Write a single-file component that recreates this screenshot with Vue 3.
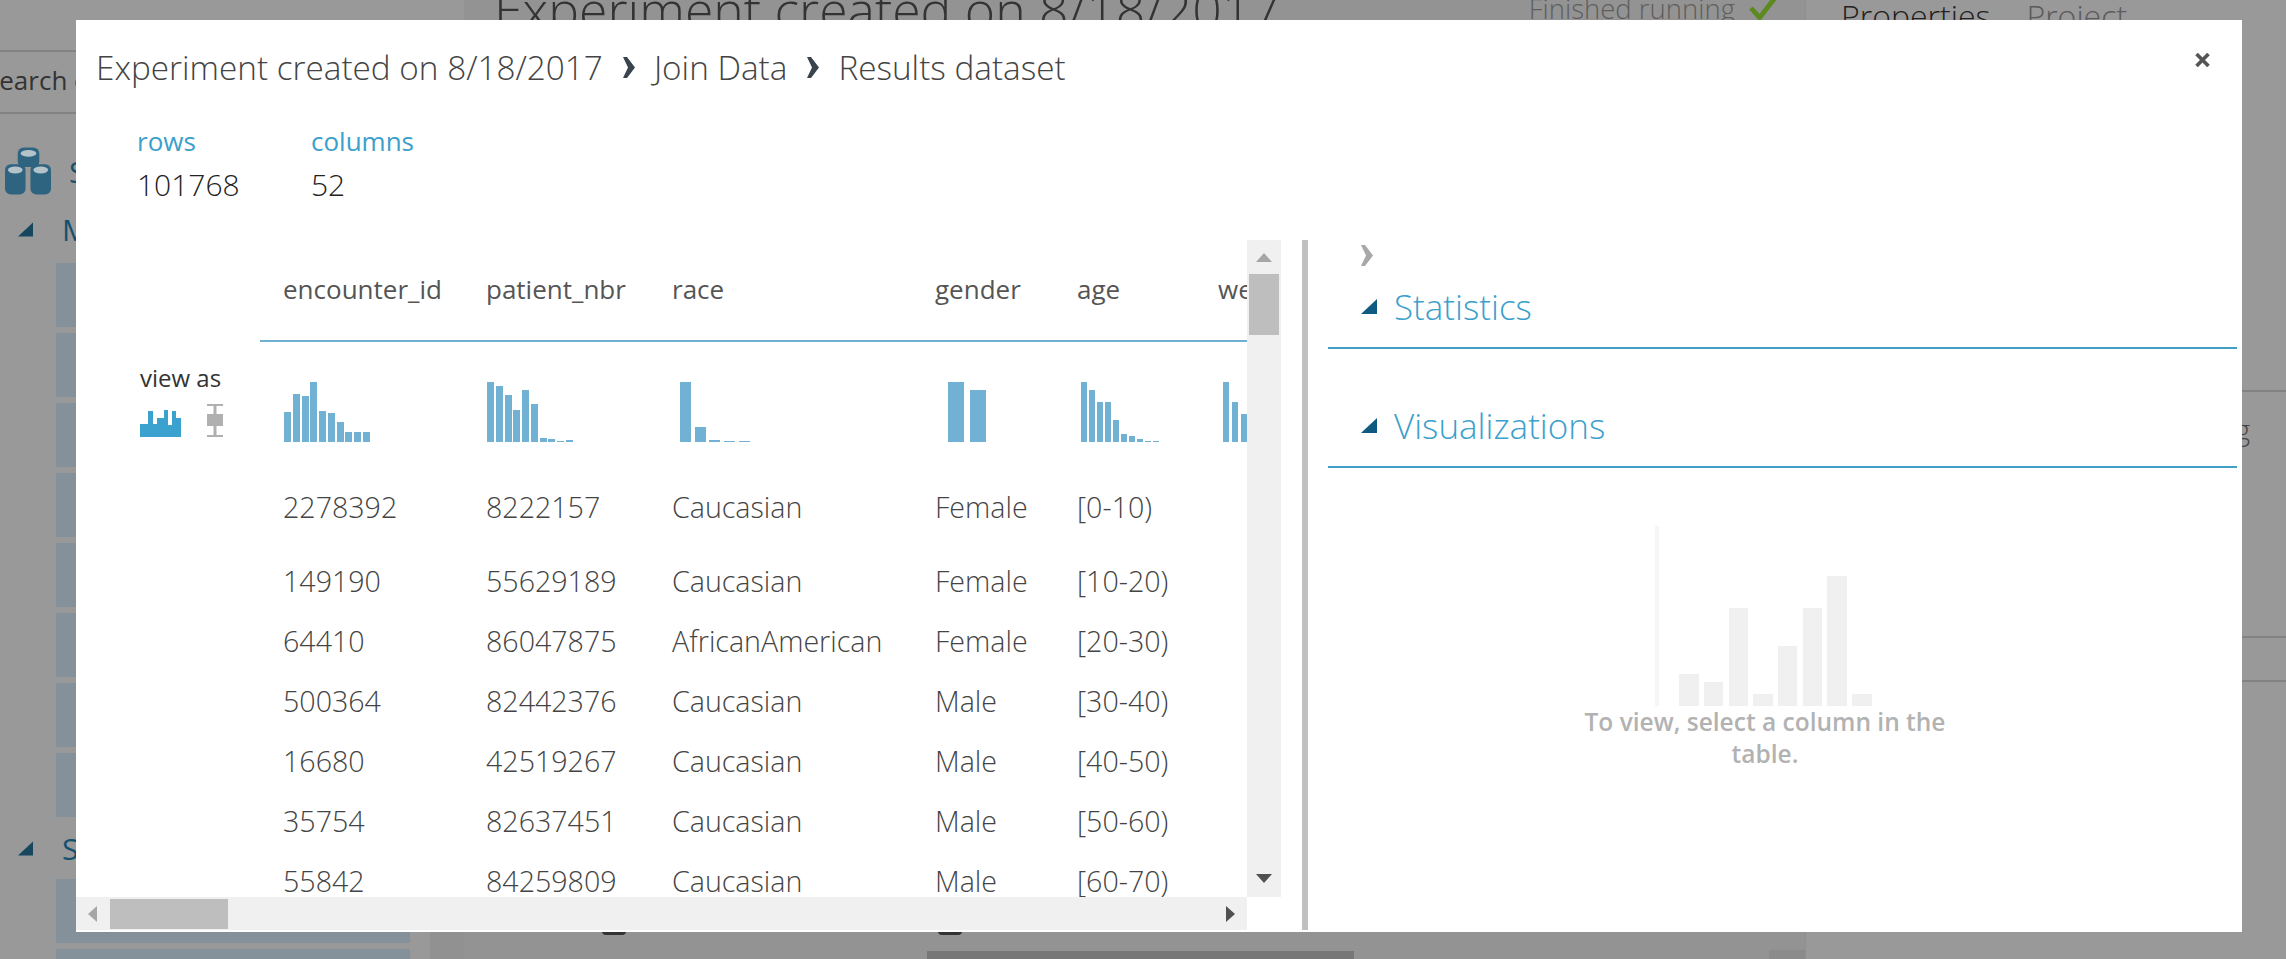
<template>
  <div class="page">
    <aside class="sidebar">
      <div class="search">Search experiment items</div>
      <div class="saved">
        <svg class="stack" viewBox="0 0 48 48">
          <rect x="13" y="0" width="22" height="20" rx="6" fill="#2f6480" />
          <ellipse cx="24" cy="6" rx="8" ry="3.5" fill="#b4c2ca" />
          <rect x="0" y="17" width="21" height="31" rx="6" fill="#2f6480" />
          <rect x="26" y="17" width="21" height="31" rx="6" fill="#2f6480" />
          <ellipse cx="10.5" cy="23" rx="7.5" ry="3.5" fill="#b4c2ca" />
          <ellipse cx="36.5" cy="23" rx="7.5" ry="3.5" fill="#b4c2ca" />
        </svg>
        <span>Saved Datasets</span>
      </div>
      <div class="group-head">
        <svg class="tri" viewBox="0 0 16 15"><path d="M16 0 V15 H0 Z" /></svg>
        <span>My Datasets</span>
      </div>
      <div class="tiles">
        <div v-for="n in 8" :key="n" class="tile"></div>
      </div>
      <div class="group-head second">
        <svg class="tri" viewBox="0 0 16 15"><path d="M16 0 V15 H0 Z" /></svg>
        <span>Samples</span>
      </div>
      <div class="tiles">
        <div v-for="n in 2" :key="n" class="tile"></div>
      </div>
      <div class="side-strip"></div>
    </aside>

    <main class="canvas">
      <div class="canvas-head">
        <h1>Experiment created on 8/18/2017</h1>
        <div class="status">
          <span>Finished running</span>
          <svg class="check" viewBox="0 0 30 24"><path d="M2 12 L11 22 L28 0" /></svg>
        </div>
      </div>
      <div class="node-dot dot-a"></div>
      <div class="node-dot dot-b"></div>
      <div class="node-corner"></div>
      <div class="canvas-thumb"></div>
    </main>

    <aside class="props">
      <div class="props-tabs">
        <span class="tab-on">Properties</span>
        <span>Project</span>
      </div>
      <div class="props-line first"></div>
      <div class="props-text">Logging</div>
      <div class="props-line second"></div>
      <div class="props-line third"></div>
    </aside>

    <section class="modal">
      <header class="crumbs">
        <span>Experiment created on 8/18/2017</span>
        <svg class="crumb-sep" viewBox="0 0 15 21"><path d="M2 0 H6 L14 10.5 L6 21 H2 L7 10.5 Z" /></svg>
        <span>Join Data</span>
        <svg class="crumb-sep" viewBox="0 0 15 21"><path d="M2 0 H6 L14 10.5 L6 21 H2 L7 10.5 Z" /></svg>
        <span>Results dataset</span>
        <svg class="close" viewBox="0 0 15 14"><path d="M1.5 1 L13.5 13 M13.5 1 L1.5 13" /></svg>
      </header>

      <div class="stats">
        <div class="stat rows-stat">
          <div class="stat-label">rows</div>
          <div class="stat-value">101768</div>
        </div>
        <div class="stat">
          <div class="stat-label">columns</div>
          <div class="stat-value">52</div>
        </div>
      </div>

      <div class="body">
        <div class="table-pane">
          <div class="table-top">
            <div class="table-clip">
              <div class="view-as">
                <div class="view-label">view as</div>
                <div class="view-icons">
                  <svg class="view-hist" viewBox="0 0 41 27">
                    <path d="M0 27 V14 H8 V1 H13 V14 H17 V8 H24 V0 H28 V15 H32 V1 H36 V8 H41 V27 Z" />
                  </svg>
                  <svg class="view-box" viewBox="0 0 16 33">
                    <path d="M0 0 H16 V2 H9.5 V10 H16 V22 H9.5 V31 H16 V33 H0 V31 H6.5 V22 H0 V10 H6.5 V2 H0 Z" />
                  </svg>
                </div>
              </div>
              <div class="grid">
                <div class="grid-row head-row">
                  <div v-for="col in columns" :key="col" class="cell">{{ col }}</div>
                </div>
                <div class="grid-row hist-row">
                  <div v-for="(hist, i) in histograms" :key="i" class="hist" :style="{ gap: hist.gap + 'px', marginLeft: hist.left + 'px' }">
                    <div
                      v-for="(h, j) in hist.bars"
                      :key="j"
                      class="hist-bar"
                      :style="{ width: hist.width + 'px', height: h + 'px' }"
                    ></div>
                  </div>
                </div>
                <div v-for="(row, i) in rows" :key="i" class="grid-row data-row" :class="{ 'first-row': i === 0 }">
                  <div v-for="(val, j) in row" :key="j" class="cell">{{ val }}</div>
                </div>
              </div>
            </div>
            <div class="vscroll">
              <span class="arrow up"></span>
              <div class="vthumb"></div>
              <span class="arrow down"></span>
            </div>
          </div>
          <div class="hscroll">
            <span class="arrow left"></span>
            <div class="hthumb"></div>
            <span class="arrow right"></span>
          </div>
        </div>

        <div class="splitter"></div>

        <div class="detail">
          <div class="detail-top">
            <svg class="detail-chev" viewBox="0 0 15 21"><path d="M2 0 H6 L14 10.5 L6 21 H2 L7 10.5 Z" /></svg>
          </div>
          <div class="section-head">
            <svg class="sec-tri" viewBox="0 0 16 15"><path d="M16 0 V15 H0 Z" /></svg>
            <span>Statistics</span>
          </div>
          <div class="section-head viz">
            <svg class="sec-tri" viewBox="0 0 16 15"><path d="M16 0 V15 H0 Z" /></svg>
            <span>Visualizations</span>
          </div>
          <div class="placeholder">
            <div class="axis"></div>
            <div v-for="(h, i) in placeholderBars" :key="i" class="ph-bar" :style="{ height: h + 'px' }"></div>
          </div>
          <p class="ph-text">To view, select a column in the table.</p>
        </div>
      </div>
    </section>
  </div>
</template>

<script setup>
const columns = ['encounter_id', 'patient_nbr', 'race', 'gender', 'age', 'weight']

const rows = [
  ['2278392', '8222157', 'Caucasian', 'Female', '[0-10)'],
  ['149190', '55629189', 'Caucasian', 'Female', '[10-20)'],
  ['64410', '86047875', 'AfricanAmerican', 'Female', '[20-30)'],
  ['500364', '82442376', 'Caucasian', 'Male', '[30-40)'],
  ['16680', '42519267', 'Caucasian', 'Male', '[40-50)'],
  ['35754', '82637451', 'Caucasian', 'Male', '[50-60)'],
  ['55842', '84259809', 'Caucasian', 'Male', '[60-70)']
]

// bar heights read off the reference
const histograms = [
  { width: 7, gap: 1.75, left: 1, bars: [30, 48, 46, 60, 31, 29, 20, 10, 10, 10] },
  { width: 7, gap: 1.75, left: 1, bars: [60, 56, 47, 32, 52, 38, 4, 3, 1, 2] },
  { width: 11, gap: 3.7, left: 8, bars: [60, 15, 2, 1.5, 1] },
  { width: 16, gap: 6, left: 13, bars: [60, 52] },
  { width: 5.5, gap: 2.5, left: 4, bars: [60, 52, 40, 40, 22, 8, 6, 3.5, 1.5, 1] },
  { width: 6, gap: 3, left: 5, bars: [60, 40, 28, 20] }
]

const placeholderBars = [32, 24, 98, 12, 60, 98, 130, 12]
</script>

<style>
html,
body {
  margin: 0;
  overflow: hidden;
  background: #999;
}
</style>

<style scoped>
.page {
  position: relative;
  display: flex;
  width: 2286px;
  height: 959px;
  overflow: hidden;
  background: #999;
  font-family: "Open Sans", "Noto Sans", sans-serif;
  font-weight: 300;
  color: #333;
}

.sidebar {
  position: relative;
  flex: 0 0 464px;
  box-sizing: border-box;
  padding-top: 50px;
  background: #999;
  overflow: hidden;
}

.search {
  height: 60px;
  line-height: 56px;
  margin-bottom: 33px;
  border-top: 2px solid #828282;
  border-bottom: 2px solid #828282;
  text-indent: -15px;
  font-size: 26px;
  font-weight: 400;
  color: #333;
  white-space: nowrap;
}

.saved {
  display: flex;
  align-items: center;
  height: 48px;
  padding-left: 5px;
  gap: 17px;
  font-size: 30px;
  font-weight: 400;
  color: #14506f;
}

.stack {
  width: 47px;
  height: 48px;
}

.group-head {
  display: flex;
  align-items: center;
  height: 68px;
  padding-left: 18px;
  gap: 29px;
  font-size: 30px;
  font-weight: 400;
  color: #14506f;
}

.group-head.second {
  height: 62px;
}

.tri {
  width: 15px;
  height: 15px;
  fill: #17465f;
}

.tiles {
  display: flex;
  flex-direction: column;
  gap: 6px;
  padding-left: 56px;
  width: 354px;
}

.tile {
  height: 64px;
  background: #85919a;
}

.side-strip {
  position: absolute;
  right: 0;
  bottom: 0;
  width: 34px;
  height: 60px;
  background: #919191;
}

.canvas {
  position: relative;
  flex: 0 0 1341px;
  background: #939393;
  overflow: hidden;
}

.canvas-head {
  display: flex;
  justify-content: space-between;
  align-items: flex-start;
  padding: 0 27px 0 30px;
}

.canvas-head h1 {
  margin: -26px 0 0;
  font-size: 51.7px;
  font-weight: 300;
  color: #333;
  white-space: nowrap;
}

.status {
  display: flex;
  gap: 14px;
  margin-top: -10px;
  font-size: 27.5px;
  color: #5e5e5e;
  white-space: nowrap;
}

.check {
  width: 29px;
  height: 24px;
  margin-top: 6px;
  fill: none;
  stroke: #5c8a1e;
  stroke-width: 5;
}

.node-dot {
  position: absolute;
  bottom: 24px;
  width: 24px;
  height: 4px;
  border-radius: 0 0 12px 12px;
  background: #333;
}

.dot-a {
  left: 138px;
}

.dot-b {
  left: 474px;
}

.node-corner {
  position: absolute;
  right: 0;
  bottom: 0;
  width: 36px;
  height: 9px;
  background: #8b8b8b;
}

.canvas-thumb {
  position: absolute;
  left: 463px;
  bottom: 0;
  width: 427px;
  height: 8px;
  background: #777;
}

.props {
  position: relative;
  flex: 1;
  background: #999;
  border-left: 1px solid #8f8f8f;
}

.props-tabs {
  display: flex;
  gap: 36px;
  margin-top: -6px;
  padding-left: 35px;
  font-size: 32px;
  color: #5b5b5b;
}

.tab-on {
  color: #222;
}

.props-line {
  position: absolute;
  right: 0;
  width: 60px;
  height: 2px;
  background: #828282;
}

.props-line.first {
  top: 390px;
}

.props-line.second {
  top: 636px;
}

.props-line.third {
  top: 680px;
}

.props-text {
  position: absolute;
  top: 410px;
  right: 36px;
  font-size: 28px;
  color: #444;
}

.modal {
  position: absolute;
  left: 76px;
  top: 20px;
  display: flex;
  flex-direction: column;
  width: 2166px;
  height: 912px;
  background: #fff;
}

.crumbs {
  position: relative;
  display: flex;
  align-items: center;
  box-sizing: border-box;
  flex: 0 0 96px;
  gap: 18px;
  padding: 0 0 2px 20px;
  font-size: 33.3px;
  color: #444;
  white-space: nowrap;
}

.crumb-sep {
  width: 15px;
  height: 21px;
  fill: #39444e;
}

.close {
  position: absolute;
  left: 2119px;
  top: 33px;
  width: 15px;
  height: 14px;
  fill: none;
  stroke: #555;
  stroke-width: 3.6;
}

.stats {
  display: flex;
  flex: 0 0 124px;
  box-sizing: border-box;
  padding: 5px 0 0 61px;
}

.rows-stat {
  width: 174px;
}

.stat-label {
  height: 40px;
  line-height: 40px;
  font-size: 26px;
  font-weight: 400;
  color: #3ba0cc;
}

.stat-value {
  height: 46px;
  line-height: 48px;
  font-size: 30px;
  color: #222;
}

.body {
  display: flex;
  flex: 0 0 690px;
}

.table-pane {
  flex: 0 0 1205px;
}

.table-top {
  display: flex;
  height: 657px;
}

.table-clip {
  display: flex;
  flex: 0 0 1171px;
  overflow: hidden;
}

.view-as {
  flex: 0 0 184px;
  box-sizing: border-box;
  padding: 122px 0 0 64px;
}

.view-label {
  height: 32px;
  line-height: 32px;
  font-size: 24px;
  font-weight: 400;
  color: #333;
  white-space: nowrap;
}

.view-icons {
  display: flex;
  align-items: flex-start;
  gap: 26px;
  margin-top: 10px;
}

.view-hist {
  width: 41px;
  height: 27px;
  margin-top: 6px;
  fill: #3ba2d0;
}

.view-box {
  width: 16px;
  height: 33px;
  fill: #b0b0b0;
}

.grid {
  flex: 0 0 1200px;
}

.grid-row {
  display: grid;
  grid-template-columns: 203px 186px 263px 142px 141px 200px;
  padding-left: 23px;
}

.cell {
  white-space: nowrap;
  font-size: 28.6px;
  color: #444;
}

.head-row {
  height: 98px;
  padding-bottom: 2px;
  width: 964px;
  border-bottom: 2px solid #6fb0d0;
  align-items: center;
}

.head-row .cell {
  font-weight: 400;
  font-size: 26px;
  color: #555;
}

.hist-row {
  height: 95px;
  padding-top: 40px;
  align-items: start;
}

.hist {
  display: flex;
  align-items: flex-end;
  height: 60px;
}

.hist-bar {
  flex: none;
  background: #71b1d3;
}

.data-row {
  height: 60px;
  align-items: center;
}

.first-row {
  height: 73px;
  align-items: start;
}

.first-row .cell {
  line-height: 60px;
}

.vscroll {
  position: relative;
  flex: 0 0 34px;
  background: #f0f0f0;
}

.vthumb {
  position: absolute;
  left: 2px;
  top: 34px;
  width: 30px;
  height: 61px;
  background: #bebebe;
}

.hscroll {
  position: relative;
  width: 1171px;
  height: 33px;
  background: #f0f0f0;
}

.hthumb {
  position: absolute;
  left: 34px;
  top: 2px;
  width: 118px;
  height: 30px;
  background: #bebebe;
}

.arrow {
  position: absolute;
  width: 0;
  height: 0;
}

.arrow.up {
  left: 9px;
  top: 13px;
  border-left: 8px solid transparent;
  border-right: 8px solid transparent;
  border-bottom: 9px solid #a6a6a6;
}

.arrow.down {
  left: 9px;
  top: 634px;
  border-left: 8px solid transparent;
  border-right: 8px solid transparent;
  border-top: 9px solid #505050;
}

.arrow.left {
  left: 12px;
  top: 9px;
  border-top: 8px solid transparent;
  border-bottom: 8px solid transparent;
  border-right: 9px solid #a6a6a6;
}

.arrow.right {
  left: 1150px;
  top: 9px;
  border-top: 8px solid transparent;
  border-bottom: 8px solid transparent;
  border-left: 9px solid #505050;
}

.splitter {
  flex: 0 0 6px;
  margin-left: 21px;
  background: #c0c0c0;
}

.detail {
  flex: 1;
  box-sizing: border-box;
  padding: 0 5px 0 20px;
}

.detail-top {
  display: flex;
  align-items: flex-start;
  height: 27px;
  padding: 5px 0 0 31px;
  box-sizing: border-box;
}

.detail-chev {
  width: 15px;
  height: 21px;
  fill: #a8a8a8;
}

.section-head {
  display: flex;
  align-items: center;
  box-sizing: content-box;
  height: 78px;
  padding: 0 0 2px 33px;
  gap: 17px;
  border-bottom: 2px solid #41a0c4;
  font-size: 35px;
  color: #3ba0cc;
}

.section-head.viz {
  margin-top: 37px;
}

.sec-tri {
  width: 16px;
  height: 15px;
  fill: #0f5a80;
}

.placeholder {
  display: flex;
  align-items: flex-end;
  gap: 5.2px;
  height: 180px;
  margin: 58px 0 0 327px;
}

.axis {
  align-self: stretch;
  width: 4px;
  margin-right: 15px;
  background: #f6f6f6;
}

.ph-bar {
  width: 19.5px;
  background: #f0f0f0;
}

.ph-text {
  width: 390px;
  margin: 0 0 0 242px;
  line-height: 32px;
  font-size: 24.5px;
  font-weight: 600;
  text-align: center;
  color: #b2b2b2;
}
</style>
